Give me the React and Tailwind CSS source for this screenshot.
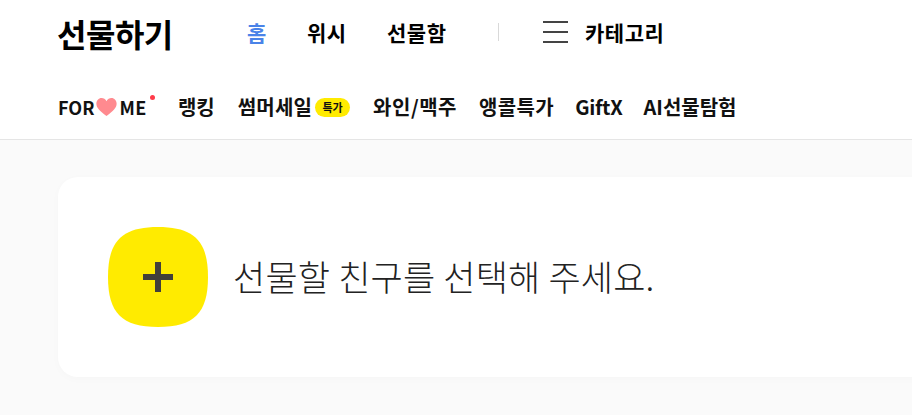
const FONT = { fontFamily: '"Noto Sans CJK KR", "Noto Sans", sans-serif' };

function Heart() {
  return (
    <svg width="21" height="18" viewBox="1 1 18 16" className="shrink-0 mx-[2px]">
      <path
        d="M10 17C4 12.5 1 9.500 1 6c0-2.800 2-5 4.600-5C7.400 1 9 2 10 3.800 11 2 12.600 1 14.400 1 17 1 19 3.200 19 6c0 3.500-3 6.500-9 11z"
        fill="#ff8a8f"
      />
    </svg>
  );
}

function Squircle() {
  return (
    <svg width="100" height="100" viewBox="0 0 100 100" className="shrink-0">
      <path
        d="M50 0C86 0 100 14 100 50S86 100 50 100 0 86 0 50 14 0 50 0z"
        fill="#ffeb00"
      />
      <rect x="35" y="47" width="30" height="6" fill="#423f3a" />
      <rect x="47" y="35" width="6" height="30" fill="#423f3a" />
    </svg>
  );
}

export default function App() {
  return (
    <div className="w-[912px] h-[415px] overflow-hidden bg-[#fafafa] text-black" style={FONT}>
      <header className="h-[140px] bg-white border-b border-[#e5e5e5] pl-[58px]">
        <div className="flex items-center h-[66px]">
          <h1 className="w-[189px] -ml-px mr-px text-[32px] font-bold tracking-[-0.5px] leading-none">선물하기</h1>
          <nav className="flex items-center text-[21px] font-semibold leading-none tracking-[0.5px] pb-[2px]">
            <span className="text-[#4a83e8] w-[60px]">홈</span>
            <span className="w-[80px]">위시</span>
            <span className="w-[111px]">선물함</span>
            <span className="w-px h-[18px] bg-[#d9d9d9] mr-[44px]" />
            <svg width="25" height="22" viewBox="0 0 25 22" className="mr-[17px]">
              <rect x="0" y="0" width="25" height="2" fill="#444" />
              <rect x="0" y="10" width="25" height="2" fill="#444" />
              <rect x="0" y="20" width="25" height="2" fill="#444" />
            </svg>
            <span>카테고리</span>
          </nav>
        </div>
        <nav className="flex items-center h-[42px] mt-[20px] text-[20px] font-semibold leading-none text-[#111]">
          <span className="relative flex items-center text-[18px] font-semibold mr-[31px]">
            <span>FOR</span>
            <Heart />
            <span className="tracking-[0.5px]">ME</span>
            <span className="absolute right-[-8px] top-[-3px] w-[5px] h-[5px] rounded-full bg-[#ff3b4a]" />
          </span>
          <span className="mr-[23px]">랭킹</span>
          <span className="flex items-center mr-[23px]">
            <span className="tracking-[0.2px]">썸머세일</span>
            <span className="ml-[3px] flex items-center justify-center w-[35px] h-[19px] rounded-full bg-[#ffeb00] text-[11px]">특가</span>
          </span>
          <span className="mr-[22px] tracking-[0.5px]">와인/맥주</span>
          <span className="mr-[21px] tracking-[0.4px]">앵콜특가</span>
          <span className="mr-[21px] tracking-[-0.3px]">GiftX</span>
          <span>AI선물탐험</span>
        </nav>
      </header>
      <main className="pl-[58px] pt-[37px]">
        <div className="w-[900px] h-[200px] rounded-[20px] bg-white shadow-[0_2px_10px_rgba(0,0,0,0.02)] flex items-center pl-[50px]">
          <Squircle />
          <p className="ml-[25px] mb-[4px] text-[35px] font-light leading-none tracking-[0.2px] text-[#222]">선물할 친구를 선택해 주세요.</p>
        </div>
      </main>
    </div>
  );
}
